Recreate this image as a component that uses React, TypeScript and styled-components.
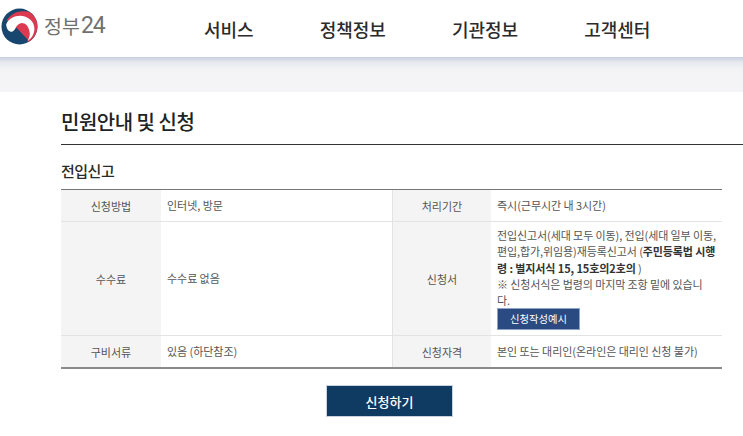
import React from 'react';
import styled, { createGlobalStyle } from 'styled-components';

const GlobalStyle = createGlobalStyle`
  html, body {
    margin: 0;
    padding: 0;
    background: #fff;
    font-family: "Noto Sans CJK KR", "Noto Sans", sans-serif;
  }
`;

const Page = styled.div`
  width: 743px;
  height: 436px;
  overflow: hidden;
`;

const Header = styled.header`
  display: flex;
  align-items: center;
  height: 57px;
`;

const Logo = styled.div`
  display: flex;
  align-items: center;
  width: 204px;
  padding-left: 1px;
  box-sizing: border-box;
  gap: 6px;
  margin-top: -5px;
`;

const LogoText = styled.span`
  display: flex;
  align-items: center;
  gap: 1px;
  font-size: 19.5px;
  color: #707070;
  line-height: 28px;
`;

const LogoNumber = styled.span`
  font-family: Roboto, "Liberation Sans", sans-serif;
  font-size: 23px;
  letter-spacing: -1px;
`;

const Nav = styled.nav`
  display: flex;
  gap: 66px;
  margin-top: 1px;
`;

const NavItem = styled.a`
  font-size: 18px;
  font-weight: 500;
  color: #2b2b2b;
  line-height: 26px;
`;

const Band = styled.div`
  height: 35px;
  background: linear-gradient(#c8cfdf 0, #e6e8ef 5px, #f3f3f6 12px, #f5f4f6 100%);
`;

const Main = styled.main`
  padding-left: 61px;
`;

const Title = styled.h1`
  margin: 0;
  height: 53px;
  box-sizing: border-box;
  padding-top: 14px;
  font-size: 20px;
  font-weight: 500;
  letter-spacing: -0.5px;
  line-height: 32px;
  color: #222;
  border-bottom: 1px solid #333;
`;

const SubTitle = styled.h2`
  margin: 0;
  height: 44px;
  padding-top: 15px;
  box-sizing: border-box;
  font-size: 15px;
  font-weight: 500;
  letter-spacing: -0.5px;
  line-height: 22px;
  color: #2a2a2a;
`;

const Table = styled.div`
  display: grid;
  grid-template-columns: 100px 231px 99px 231px;
  grid-template-rows: 32px 114px 31px;
  width: 661px;
  border-top: 1px solid #777;
  border-bottom: 2px solid #8a8a8a;
`;

const HeadCell = styled.div<{ $divided?: boolean; $last?: boolean }>`
  display: flex;
  align-items: center;
  justify-content: center;
  background: #f4f4f4;
  font-size: 11px;
  color: #555;
  border-bottom: ${(p) => (p.$last ? 'none' : '1px solid #e3e3e3')};
  border-left: ${(p) => (p.$divided ? '1px solid #e3e3e3' : 'none')};
`;

const Cell = styled.div<{ $last?: boolean; $stacked?: boolean }>`
  display: ${(p) => (p.$stacked ? 'block' : 'flex')};
  align-items: center;
  padding: ${(p) => (p.$stacked ? '5px 0 0 6px' : '0 0 0 6px')};
  font-size: 11px;
  line-height: 16.25px;
  color: #555;
  letter-spacing: ${(p) => (p.$stacked ? '-0.1px' : '-0.05px')};
  white-space: nowrap;
  border-bottom: ${(p) => (p.$last ? 'none' : '1px solid #e3e3e3')};
`;

const Strong = styled.strong`
  font-weight: 700;
  color: #333;
`;

const FormButton = styled.button`
  display: block;
  width: 83px;
  height: 22px;
  margin: 0;
  padding: 0;
  border: 1px solid #8fa3c4;
  background: #2a4b82;
  color: #fff;
  font: inherit;
  font-size: 10.3px;
`;

const Actions = styled.div`
  display: flex;
  justify-content: center;
  width: 657px;
  margin-top: 16px;
`;

const SubmitButton = styled.button`
  width: 127px;
  height: 32px;
  padding: 0;
  border: 1px solid #c9d3dd;
  background: #0f3b63;
  color: #fff;
  font: inherit;
  font-size: 13px;
  font-weight: 500;
`;

const Emblem = () => (
  <svg width="37" height="37" viewBox="0 0 36 36" aria-hidden="true">
    <circle cx="18" cy="18" r="17.5" fill="#17476f" />
    <path d="M5.500 12C9 6.500 14 3.500 19 3.300C23 3.200 27 3 30.500 5.800A17.500 17.500 0 0 1 26 33.500L26 31 14 18Z" fill="#dc3a50" />
    <path d="M5 16C7 10.500 13 7.500 18.500 7.500C26 7.500 32.500 13 32.500 20C32.500 25 30 29.500 26 32C28 28.500 28.500 25 27.500 22C26.500 17.500 24 14.500 20 14.500C17 15 15.500 17 14.500 19C13 22 11.500 23.500 9.500 23C6.500 22.500 5.300 19 5 16Z" fill="#fff" />
  </svg>
);

const menus = ['서비스', '정책정보', '기관정보', '고객센터'];

export default function App() {
  return (
    <Page>
      <GlobalStyle />
      <Header>
        <Logo>
          <Emblem />
          <LogoText>
            정부<LogoNumber>24</LogoNumber>
          </LogoText>
        </Logo>
        <Nav>
          {menus.map((menu) => (
            <NavItem key={menu}>{menu}</NavItem>
          ))}
        </Nav>
      </Header>
      <Band />
      <Main>
        <Title>민원안내 및 신청</Title>
        <SubTitle>전입신고</SubTitle>
        <Table>
          <HeadCell>신청방법</HeadCell>
          <Cell>인터넷, 방문</Cell>
          <HeadCell $divided>처리기간</HeadCell>
          <Cell>즉시(근무시간 내 3시간)</Cell>

          <HeadCell>수수료</HeadCell>
          <Cell>수수료 없음</Cell>
          <HeadCell $divided>신청서</HeadCell>
          <Cell $stacked>
            전입신고서(세대 모두 이동), 전입(세대 일부 이동,
            <br />
            편입,합가,위임용)재등록신고서 (<Strong>주민등록법 시행</Strong>
            <br />
            <Strong>령 : 별지서식 15, 15호의2호의 </Strong>)
            <br />
            ※ 신청서식은 법령의 마지막 조항 밑에 있습니
            <br />
            다.
            <FormButton type="button">신청작성예시</FormButton>
          </Cell>

          <HeadCell $last>구비서류</HeadCell>
          <Cell $last>있음 (하단참조)</Cell>
          <HeadCell $divided $last>신청자격</HeadCell>
          <Cell $last>본인 또는 대리인(온라인은 대리인 신청 불가)</Cell>
        </Table>
        <Actions>
          <SubmitButton type="button">신청하기</SubmitButton>
        </Actions>
      </Main>
    </Page>
  );
}
